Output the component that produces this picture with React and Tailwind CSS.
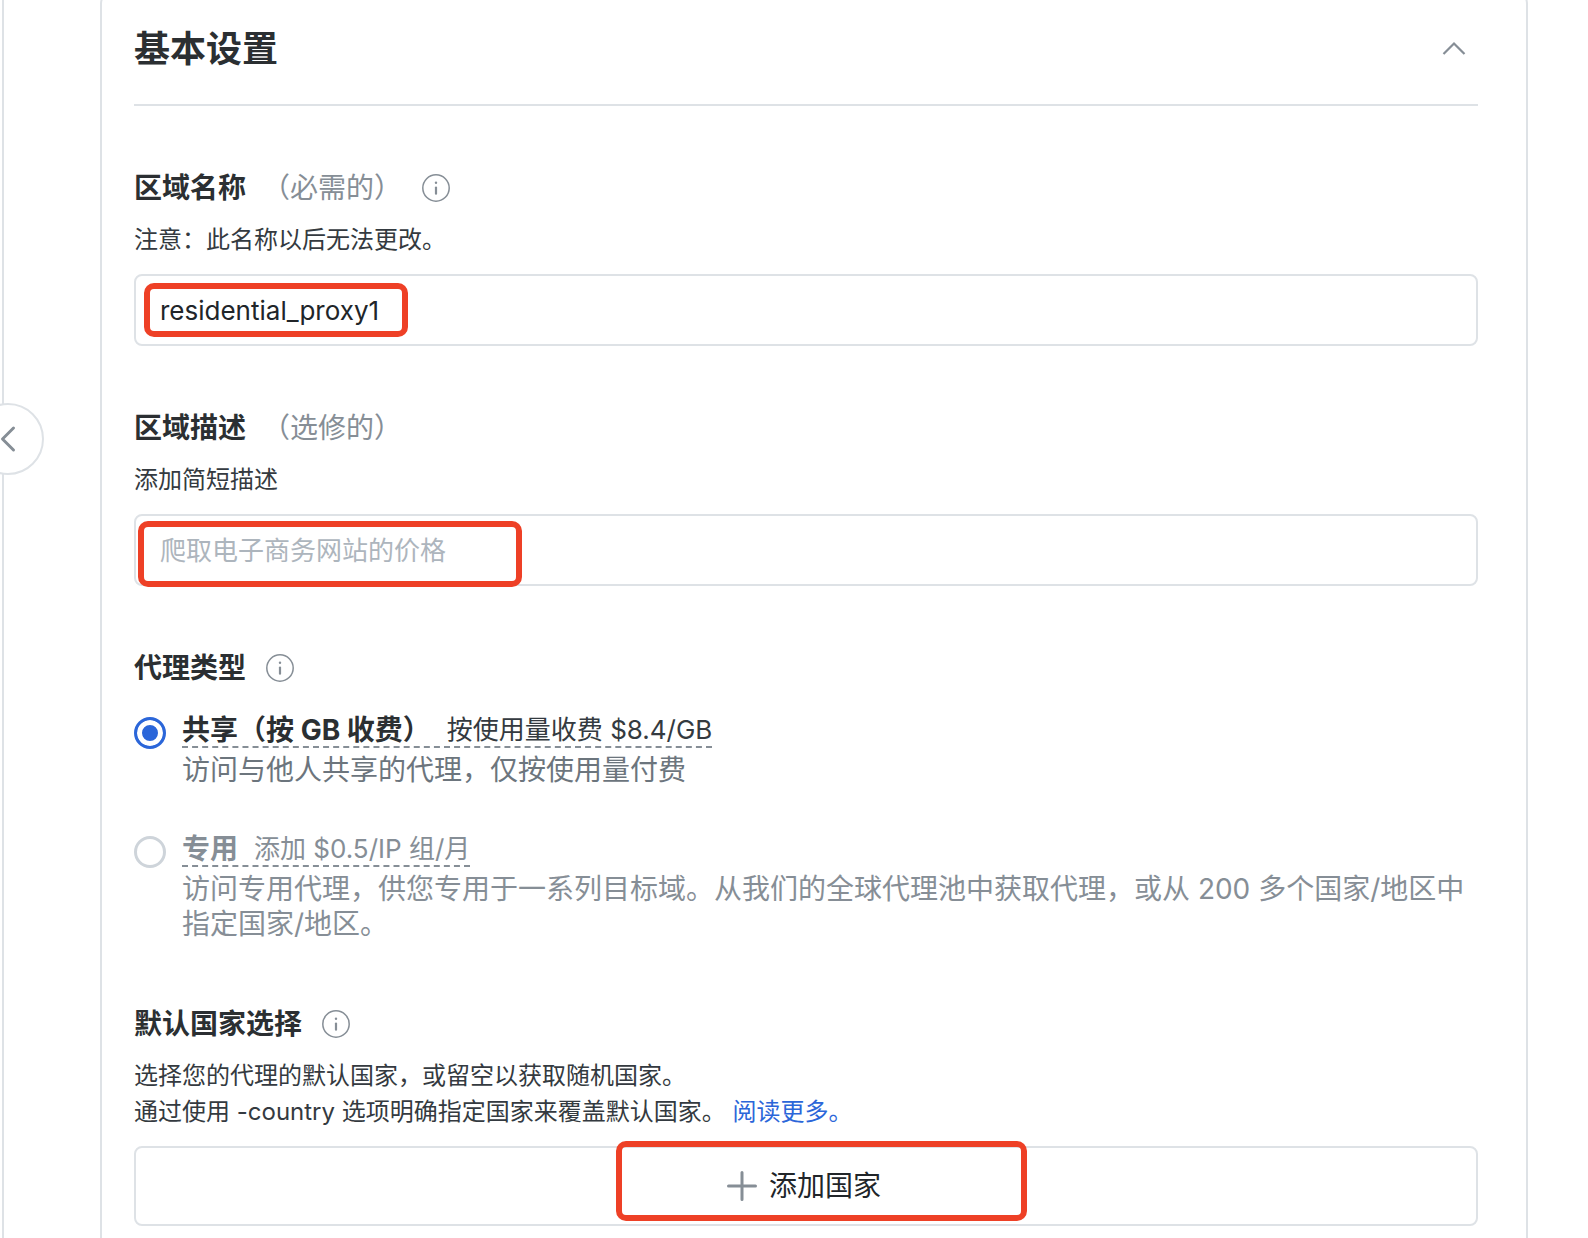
import { useState } from 'react'

const PROXY_TYPES = [
  {
    value: 'shared',
    title: '共享（按 GB 收费）',
    price: '按使用量收费 $8.4/GB',
    text: '访问与他人共享的代理，仅按使用量付费',
  },
  {
    value: 'dedicated',
    title: '专用',
    price: '添加 $0.5/IP 组/月',
    text: '访问专用代理，供您专用于一系列目标域。从我们的全球代理池中获取代理，或从 200 多个国家/地区中指定国家/地区。',
    disabled: true,
  },
]

const inputClass =
  'block w-full h-[72px] rounded-lg border-2 border-[#dee2e6] bg-white px-6 text-[26px] text-[#212529] placeholder:text-[#adb5bd] focus:outline-none focus:border-blue-400'

export default function App() {
  const [name, setName] = useState('residential_proxy1')
  const [description, setDescription] = useState('')
  const [type, setType] = useState('shared')

  return (
    <div
      lang="zh-CN"
      className="flex min-h-screen bg-white overflow-hidden font-['Inter','Noto_Sans_CJK_SC',sans-serif] text-[#343a40]">

      {/* Collapsed sidebar edge */}
      <div className="relative w-1 shrink-0 border-r-2 border-[#dee2e6]">
        <button
          aria-label="收起侧栏"
          className="absolute top-[403px] -left-7 flex size-[72px] items-center justify-center rounded-full border-2 border-[#dee2e6] bg-white">
          <svg width="16" height="28" viewBox="0 0 16 28" fill="none" stroke="#868e96" strokeWidth="3" strokeLinecap="round" strokeLinejoin="round">
            <path d="M13.5 3 2.5 14l11 11" />
          </svg>
        </button>
      </div>

      <main className="ml-24 mr-15 -mt-3 flex-1 rounded-2xl border-2 border-[#dee2e6] pl-8 pr-12 pt-8 pb-12">

        {/* Header */}
        <header className="flex items-center justify-between border-b-2 border-[#dee2e6] pb-7 pr-3">
          <h1 className="text-4xl leading-[54px] font-bold text-[#2b2f32]">基本设置</h1>
          <button aria-label="收起" aria-expanded="true">
            <svg width="24" height="16" viewBox="0 0 24 16" fill="none" stroke="#868e96" strokeWidth="2.2">
              <path d="M1.5 13 12 2.5 22.5 13" />
            </svg>
          </button>
        </header>

        <section className="mt-[62px]">
          <FieldTitle htmlFor="zone-name" label="区域名称" note="（必需的）" info />
          <p className="mt-3.5 text-2xl leading-9">注意：此名称以后无法更改。</p>
          <div className="relative mt-4">
            <input
              id="zone-name"
              type="text"
              value={name}
              onChange={e => setName(e.target.value)}
              className={inputClass}
            />
            <Highlight className="left-2.5 top-[9px] h-[54px] w-[264px]" />
          </div>
        </section>

        <section className="mt-[62px]">
          <FieldTitle htmlFor="zone-description" label="区域描述" note="（选修的）" />
          <p className="mt-3.5 text-2xl leading-9">添加简短描述</p>
          <div className="relative mt-4">
            <input
              id="zone-description"
              type="text"
              value={description}
              placeholder="爬取电子商务网站的价格"
              onChange={e => setDescription(e.target.value)}
              className={inputClass}
            />
            <Highlight className="left-1 top-[7px] h-[66px] w-[384px]" />
          </div>
        </section>

        <section className="mt-[62px]">
          <FieldTitle label="代理类型" info />
          <div className="mt-[23px] flex flex-col gap-[42px]">
            {PROXY_TYPES.map(t => (
              <ProxyType key={t.value} {...t} checked={type === t.value} onSelect={setType} />
            ))}
          </div>
        </section>

        <section className="mt-[62px]">
          <FieldTitle label="默认国家选择" info />
          <p className="mt-3.5 text-2xl leading-9">
            选择您的代理的默认国家，或留空以获取随机国家。
            <br />
            通过使用 -country 选项明确指定国家来覆盖默认国家。{' '}
            <a href="#country" className="text-[#2b66d9] hover:underline">阅读更多。</a>
          </p>
          <div className="relative mt-4">
            <button className="flex h-20 w-full items-center justify-center gap-3 rounded-lg border-2 border-[#dee2e6] bg-white pr-1 text-[28px] text-[#212529]">
              <svg width="30" height="30" viewBox="0 0 30 30" fill="none" stroke="#868e96" strokeWidth="3" strokeLinecap="round">
                <path d="M15 1.5v27M1.5 15h27" />
              </svg>
              添加国家
            </button>
            <Highlight className="left-[482px] -top-[5px] h-20 w-[411px]" />
          </div>
        </section>

      </main>
    </div>
  )
}

function FieldTitle({ label, note, info, htmlFor }) {
  const Label = htmlFor ? 'label' : 'h2'
  return (
    <div className="flex items-center text-[28px] leading-10">
      <Label htmlFor={htmlFor} className="font-bold text-[#2b2f32]">{label}</Label>
      {note && <span className="ml-4 text-[#868e96]">{note}</span>}
      {info && (
        <button aria-label={`${label}说明`} className="ml-5">
          <InfoIcon />
        </button>
      )}
    </div>
  )
}

function ProxyType({ value, title, price, text, disabled, checked, onSelect }) {
  return (
    <label className="flex items-start gap-4">
      <input
        type="radio"
        name="proxy-type"
        value={value}
        checked={checked}
        disabled={disabled}
        onChange={() => onSelect(value)}
        className="mt-1.5 size-8 shrink-0 appearance-none rounded-full border-[3px] border-[#ced4da] bg-white checked:border-[#2b66d9] checked:bg-[#2b66d9] checked:shadow-[inset_0_0_0_5px_white]"
      />
      <span className="flex flex-col items-start">
        <span className={`flex items-center gap-4 border-b-2 border-dashed border-[#868e96] pt-[3px] leading-8 ${
          disabled ? 'text-[#868e96]' : 'text-[#343a40]'
        }`}>
          <span className={`text-[28px] font-bold ${disabled ? '' : 'text-[#2b2f32]'}`}>{title}</span>
          <span className="text-[26px]">{price}</span>
        </span>
        <span className={`mt-[5px] text-[28px] leading-[35px] ${disabled ? 'text-[#868e96]' : 'text-[#6c757d]'}`}>
          {text}
        </span>
      </span>
    </label>
  )
}

function InfoIcon() {
  return (
    <svg className="block" width="28" height="28" viewBox="0 0 28 28" fill="none" stroke="#868e96">
      <circle cx="14" cy="14" r="13.2" strokeWidth="1.5" />
      <path d="M14 13.5v6.2" strokeWidth="2.2" strokeLinecap="round" />
      <circle cx="14" cy="8.8" r="1.2" fill="#868e96" stroke="none" />
    </svg>
  )
}

// Red marker frame drawn over a control
function Highlight({ className }) {
  return (
    <div className={`pointer-events-none absolute rounded-[10px] border-[6px] border-[#ee4026] ${className}`} />
  )
}
